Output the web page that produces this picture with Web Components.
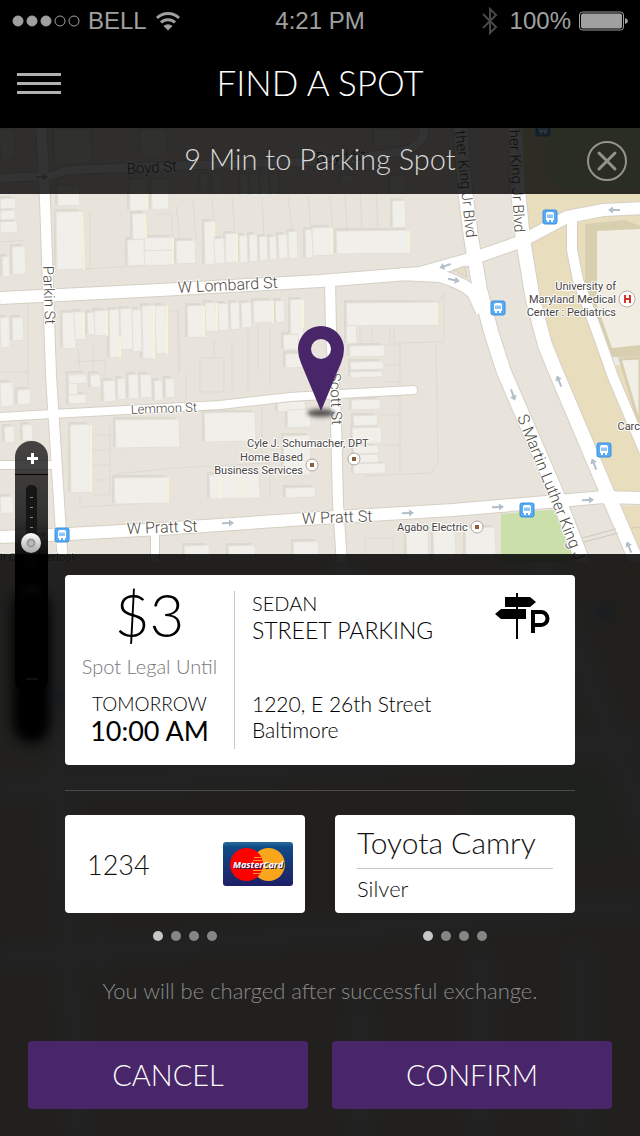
<!DOCTYPE html>
<html lang="en">
<head>
<meta charset="utf-8">
<meta name="viewport" content="width=device-width, initial-scale=1">
<title>Find a spot</title>
<style>
  body{
    margin: 0;
    background: #000;
    font-family: Lato, "Open Sans", sans-serif;
    font-weight: 300;
    --purple: #482669;
  }
</style>
</head>
<body>
<parking-screen>
  <status-bar slot="top" carrier="BELL" time="4:21 PM" battery="100%"></status-bar>
  <nav-bar slot="top">FIND A SPOT</nav-bar>
  <city-map slot="map"></city-map>
  <zoom-control slot="map"></zoom-control>
  <eta-banner slot="banner">9 Min to Parking Spot</eta-banner>

  <spot-card>
    <span slot="price">$3</span>
    <span slot="note">Spot Legal Until</span>
    <span slot="day">TOMORROW</span>
    <span slot="hour">10:00 AM</span>
    <span slot="vehicle">SEDAN</span>
    <span slot="kind">STREET PARKING</span>
    <span slot="address">1220, E 26th Street<br>Baltimore</span>
  </spot-card>
  <choice-row>
    <card-pager label="Payment card"><payment-card>1234</payment-card></card-pager>
    <card-pager label="Car"><car-card>Toyota Camry<span slot="colour">Silver</span></car-card></card-pager>
  </choice-row>
  <span slot="hint">You will be charged after successful exchange.</span>
  <action-button slot="actions">CANCEL</action-button>
  <action-button slot="actions">CONFIRM</action-button>
</parking-screen>

<script>
const define = (name, render, ready) => customElements.define(name, class extends HTMLElement{
  constructor(){
    super();
    this.attachShadow({mode:'open'});
  }

  connectedCallback(){
    this.shadowRoot.innerHTML = render(this);
    if(ready) ready(this, this.shadowRoot);
  }
});

define('status-bar', el => `
  <style>
    :host{
      display: grid;
      grid-template-columns: 1fr auto 1fr;
      align-items: center;
      height: 40px;
      padding: 0 12px;
      background: #000;
      color: #a0a0a0;
      font: 400 24px/42px "Liberation Sans", Arial, sans-serif;
    }
    div{ display: flex; align-items: center; gap: 8px; }
    div:last-child{ justify-content: flex-end; }
    svg{ display: block; }
  </style>
  <div>
    <svg width="68" height="12" viewBox="0 0 68 12" fill="#a0a0a0" stroke="#a0a0a0">
      <circle cx="6" cy="6" r="5"/><circle cx="20" cy="6" r="5"/><circle cx="34" cy="6" r="5"/>
      <circle cx="48" cy="6" r="5" fill="none"/><circle cx="62" cy="6" r="5" fill="none"/>
    </svg>
    <span>${el.getAttribute('carrier')}</span>
    <svg width="26" height="20" viewBox="0 0 26 20" fill="none" stroke="#a0a0a0" stroke-width="3">
      <path d="M2 7a16 16 0 0 1 22 0M6 11.500a10 10 0 0 1 14 0"/>
      <path d="M8.500 15a6.500 6.500 0 0 1 9 0L13 19.500z" fill="#a0a0a0" stroke="none"/>
    </svg>
  </div>
  <span>${el.getAttribute('time')}</span>
  <div>
    <svg width="16" height="28" viewBox="0 0 16 28" fill="none" stroke="#484848" stroke-width="2">
      <path d="M1 7l13 13-6 6V2l6 6L1 21"/>
    </svg>
    <span style="margin-left:4px">${el.getAttribute('battery')}</span>
    <svg width="49" height="20" viewBox="0 0 49 20">
      <rect x="0.500" y="1" width="44" height="18" rx="3" fill="none" stroke="#a0a0a0"/>
      <rect x="2" y="2.500" width="41" height="15" rx="2" fill="#a0a0a0"/>
      <path d="M46 7q3 1 3 3t-3 3z" fill="#a0a0a0"/>
    </svg>
  </div>
`);

define('nav-bar', () => `
  <style>
    :host{
      display: grid;
      grid-template-columns: 1fr auto 1fr;
      align-items: center;
      height: 88px;
      padding: 0 17px;
      background: #000;
      color: #fff;
    }
    button{
      width: 44px;
      height: 44px;
      padding: 0;
      border: 0;
      background: none;
    }
    svg{ display: block; }
    h1{ margin: 0; font: inherit; font-size: 35px; line-height: 84px; height: 88px; }
  </style>
  <button aria-label="Menu">
    <svg width="44" height="44" fill="#b0b0b0">
      <path d="M0 11h44v3H0zM0 20h44v3H0zM0 29h44v3H0z"/>
    </svg>
  </button>
  <h1><slot></slot></h1>
`);

define('eta-banner', () => `
  <style>
    :host{
      display: grid;
      grid-template-columns: 40px 1fr 40px;
      align-items: center;
      height: 66px;
      padding: 0 13px;
      background: rgba(0, 0, 0, .8);
      color: #d8d8d8;
      font-size: 29px;
    }
    p{ grid-column: 2; margin: 0; text-align: center; line-height: 62px; height: 66px; }
    button{
      width: 40px;
      height: 40px;
      padding: 0;
      border: 0;
      background: none;
    }
    svg{ display: block; }
  </style>
  <p><slot></slot></p>
  <button aria-label="Close">
    <svg width="40" height="40" fill="none" stroke="#96928e" stroke-width="2">
      <circle cx="20" cy="20" r="19"/>
      <path d="M12 12l16 16M28 12L12 28" stroke-width="3" stroke-linecap="round"/>
    </svg>
  </button>
`);

const buildings = [
  [0,199,15,10],[0,211,15,9],[0,222,17,11],[12,247,13,28],[2,257,7,20],[57,186,22,20],[56,212,26,58],
  [129,180,18,31],[151,180,17,30],[132,214,14,26],[127,240,17,26],[144,238,29,13],[144,251,29,15],
  [176,241,19,23],[204,222,10,43],[214,239,10,25],[225,234,12,29],[239,236,8,27],[249,235,8,27],
  [259,237,8,24],[269,237,7,23],[278,235,9,24],[288,232,9,27],[305,230,7,28],[312,228,20,28],
  [336,231,73,23],[392,201,13,27],[346,303,91,23],[346,326,10,18],[349,346,35,11],[350,362,33,8],
  [62,313,13,36],[74,312,10,28],[87,313,7,22],[94,311,13,25],[109,310,10,48],[120,309,12,41],
  [132,310,9,42],[142,306,12,53],[155,306,11,48],[187,306,17,32],[205,303,11,29],[218,304,10,27],
  [230,303,9,27],[241,303,10,25],[253,301,20,22],[275,301,9,22],[290,300,13,42],[283,335,15,15],
  [285,354,30,14],[0,318,9,30],[12,318,11,23],[0,383,13,24],[17,390,13,15],[68,375,9,30],[68,375,18,9],
  [68,395,18,9],[90,375,10,13],[103,381,12,21],[117,379,8,21],[128,375,10,24],[140,375,11,23],
  [154,381,8,20],[165,379,9,19],[4,427,10,16],[22,425,10,16],[70,425,20,68],[115,420,64,28],
  [204,413,51,29],[277,402,28,10],[287,410,23,18],[283,436,27,40],[114,478,54,26],[209,475,50,24],
  [285,488,30,10],[0,497,13,17],[184,546,25,16],[228,546,27,16],[293,542,25,20],[350,372,32,6],
  [351,400,29,10],[353,416,24,10],[352,428,29,16],[353,446,25,8],[353,455,25,8],[353,464,32,10],
  [406,532,22,30],[433,530,22,30],[465,528,30,30],[67,374,20,1],[90,374,11,1],
  [0,130,14,30],[54,130,36,34],[140,130,26,26],[374,130,26,16],[200,174,8,18],
  [212,174,8,18],[240,174,8,22],[250,174,8,22],[260,174,8,22],[270,174,8,22],[340,176,12,8],[390,176,14,18]
];

const plots = `M90 212v58M157 214h15v24M176 205l4 34M193 200l3 40M212 198l2 24M232 197l3 38M262 198l2 38M288 196l4 36
  M308 196l3 32M330 196l3 34M345 194l2 36M360 194l2 36M376 194l2 36M84 269l90-5M26 240l-26 2M78 349l3 28M93 345v30
  M105 358v16M75 362l31-2M168 311h10v64M178 311l2 60M200 358h24v34h-24zM214 340v16M232 340v50M248 330v60M258 326v44
  M270 326v60M0 372h28M28 300v104M375 318l54-4 15-20v48l-50 1v-17M360 328v14M372 328v14M390 328v14M384 345h16v20h-16
  M400 345v130M436 345l2 118-7 10-68 3M384 382h18M384 396h18M380 415h20M383 445h18M110 425v70h-18M92 435h18M92 450h18
  M92 465h18M92 480h18M115 474l60-6 95-5v35M80 495v12l90-5M186 374v30M262 405v60M365 556v-18h28v18M120 166v-36M180 166v-36
  M220 164v-34M260 162v-32M300 160v-30M92 130v34`;

const streets = `M0 178L50 176 68 170 200 165 340 161 398 152Q424 148 424 128
  M0 465h54`;
const avenues = `M41 120L45 200 51 375 63 565M330 280L331 330 336 420 338 503 342 565M572 215V250L578 280 600 340 613 377 645 453`;
const mains = `M0 298L160 290 320 281 420 273 477 257 520 242 567 217 603 210 645 208
  M400 274L440 276Q466 284 474 294L482 312
  M0 537L50 535 160 529 320 518 453 510 570 500 603 497 645 498`;
const boulevards = `M460 120L465 190 471 237 480 290 492 335 504 372 555 490 584 565M515 120L518 190 523 240 533 300 545 345 556 372 606 490 638 565`;

// drawn twice: the wide pass leaves a thin casing round the white pass
const roads = (colour, extra) => `
  <g fill="none" stroke="${colour}">
    <path stroke-width="${8 + extra}" d="${streets}M155 526v36"/>
    <path stroke-width="${8 + extra}" stroke-linecap="round" d="M0 417L52 414 220 405 290 397 340 394 413 390"/>
    <path stroke-width="${10 + extra}" d="${avenues}"/>
    <path stroke-width="${12 + extra}" d="${mains}"/>
    <path stroke-width="${14 + extra}" d="${boulevards}"/>
  </g>`;

const bus = (x, y) => `
  <g transform="translate(${x} ${y})">
    <rect x="-7" y="-7" width="14" height="14" rx="2" fill="#58aaf5" stroke="#3c8fdc"/>
    <path d="M-4-3q0-2 2-2h4q2 0 2 2v6h-1v2h-2v-2h-2v2h-2v-2h-1z" fill="#fff"/>
    <path d="M-3-2.500h6V1h-6z" fill="#8cc6fa"/>
  </g>`;

const arrow = (x, y, turn) => `
  <path transform="translate(${x} ${y}) rotate(${turn})" d="M-6-1H1v-2.500L6 0 1 3.500V1h-7z" fill="#b3bfc8"/>`;

const place = (x, y) => `
  <circle cx="${x}" cy="${y}" r="6" fill="#fff" stroke="#aaa59c"/>
  <rect x="${x - 2}" y="${y - 2}" width="4" height="4" fill="#8d5d3c"/>`;

const street = (x, y, turn, size, text) => `
  <text transform="translate(${x} ${y}) rotate(${turn})" font-size="${size}">${text}</text>`;

define('city-map', () => `
  <style>
    :host{ display: block; position: absolute; inset: 0; overflow: hidden; }
    svg{ display: block; width: 100%; height: 100%; }
    text{
      font-family: Roboto, sans-serif;
      stroke: #fff;
      stroke-width: 2px;
      stroke-linejoin: round;
      paint-order: stroke;
    }
    .streets{ font-weight: 300; fill: #4e4a42; }
    .places{ font-weight: 400; font-size: 11px; fill: #47443f; stroke: #f3f0ea; }
  </style>
  <svg viewBox="0 128 640 1008" preserveAspectRatio="xMidYMin slice" role="img" aria-label="Map">
    <defs>
      <filter id="soft" x="-20%" y="-20%" width="140%" height="140%"><feGaussianBlur stdDeviation="7"/></filter>
      <filter id="shade" x="-50%" y="-100%" width="200%" height="300%"><feGaussianBlur stdDeviation="2"/></filter>
      <clipPath id="sharp"><path d="M0 128h640v434H0z"/></clipPath>
    </defs>
    <rect y="128" width="640" height="1008" fill="#e8e4dc"/>

    <g filter="url(#soft)" fill="none" stroke="#f5f3f8" stroke-width="14">
      <path d="M45 560L80 1136M345 560V760M0 790L640 740M540 560L660 860M620 560L660 660M0 960L640 905M100 930V970M480 950V1136M580 950V1136M360 1000V1136"/>
      <path d="M470 770h130l22 82-148 8z" fill="#d4e6bd" stroke="none"/>
      <path d="M590 560h50v100h-30z" fill="#e8ddbb" stroke="none"/>
      <circle cx="605" cy="612" r="9" fill="#8fc2f0" stroke="none"/>
      <circle cx="62" cy="697" r="9" fill="#8fc2f0" stroke="none"/>
    </g>

    <g clip-path="url(#sharp)">
      <rect y="128" width="640" height="434" fill="#e8e4dc"/>
      <path d="M524 128h116v370h-30l-50-120-22-70-14-70z" fill="#e8ddbd"/>
      <path d="M546 128h94v62h-80q-14-4-14-20z" fill="#cbdfab"/>
      <path d="M501 514l60-5 24 53h-84z" fill="#cbdfab"/>
      <path d="M622 506h18v56z" fill="#e8ddbd"/>
      <path d="M585 224l40-4 15 6v130l-34 2-21-53z" fill="#d8cfb1"/>
      <path d="M597 231l43-2v116l-28 3-15-43z" fill="#f1ede2"/>
      <path d="M610 357h30v8h-28z" fill="#ebebec"/>
      <path d="M620 359l20-1v68z" fill="#f1eee6" stroke="#d8cfb1" stroke-width="3"/>
      <path d="${plots}" fill="none" stroke="#dfdad1"/>
      <g fill="#dcd9d1" transform="translate(-2 -3)">
        ${buildings.map(([x, y, w, h]) => `<path d="M${x} ${y}h${w - 2}l2 3v${Math.min(h, 3)}H${x + 2}v${Math.max(h - 4, 0)}h-2z"/>`).join('')}
      </g>
      <g fill="#f1efe9" stroke="#e4e1da">
        ${buildings.map(([x, y, w, h]) => `<path d="M${x} ${y}l${w}-1 1 ${h}-${w} 1z"/>`).join('')}
      </g>
      <path d="M82 212l2 58M147 194v16M145 214l1 24M173 238v26M214 222v14M237 234v28M332 228v26M409 231v22M84 313v26M107 311v25
        M120 336v22M154 306v53M167 306v48M204 306v31M217 303v28M273 301v22M303 300v28M437 303v22M91 425v67M168 478v25M220 478v21M240 478v20"
        fill="none" stroke="#f6f3d8" stroke-width="2"/>
      ${roads('#d6d0c4', 2)}
      ${roads('#fff', 0)}
      <path d="M453 270l12-4 2 11z" fill="#e8ddc8" stroke="#d6d0c4"/>
      <path d="M582 538l34-9M584 542l34-9M632 528l8-1" stroke="#cfc9bf"/>

      ${arrow(445, 266, 160)}${arrow(454, 280, 12)}${arrow(614, 210, 180)}${arrow(513, 395, 70)}
      ${arrow(559, 381, -112)}${arrow(594, 464, -112)}${arrow(629, 547, -112)}${arrow(228, 523, -2)}
      ${arrow(408, 513, -2)}${arrow(498, 507, -3)}${arrow(588, 500, -3)}${arrow(42, 177, 0)}${arrow(41, 534, 0)}
      ${bus(543, 129)}${bus(550, 217)}${bus(498, 308)}${bus(604, 450)}${bus(527, 510)}${bus(62, 535)}

      <g class="streets">
        ${street(127, 174, -3, 15, 'Boyd St')}
        ${street(316, 163, -3, 15, 'Boyd St')}
        ${street(178, 293, -3, 16, 'W Lombard St')}
        ${street(43, 266, 88, 15, 'Parkin St')}
        ${street(131, 414, -2, 13, 'Lemmon St')}
        ${street(127, 534, -2, 16, 'W Pratt St')}
        ${street(302, 524, -2, 16, 'W Pratt St')}
        ${street(330, 373, 88, 15, 'Scott St')}
        ${street(455, 131, 84, 15, 'ther King Jr Blvd')}
        ${street(509, 130, 87, 15, 'her King Jr Blvd')}
        ${street(517, 417, 68, 16, 'S Martin Luther King J')}
      </g>
      <g class="places">
        <text x="247" y="447">Cyle J. Schumacher, DPT</text>
        <text x="303" y="461" text-anchor="end">Home Based</text>
        <text x="303" y="474" text-anchor="end">Business Services</text>
        <text x="397" y="531">Agabo Electric</text>
        <text x="616" y="290" text-anchor="end">University of</text>
        <text x="616" y="303" text-anchor="end">Maryland Medical</text>
        <text x="616" y="316" text-anchor="end">Center : Pediatrics</text>
        <text x="640" y="430" text-anchor="end">Carc</text>
        <text x="0" y="561" opacity=".6">lt Clair Overlook</text>
      </g>
      ${place(312, 465)}${place(354, 459)}${place(477, 527)}
      <circle cx="627" cy="299" r="8" fill="#fff" stroke="#b5b0a5"/>
      <path d="M625 295v8M630 295v8M625 299h5" fill="none" stroke="#d8342c" stroke-width="2"/>
    </g>

    <ellipse cx="321" cy="413" rx="14" ry="4" fill="#333" opacity=".8" filter="url(#shade)"/>
    <path d="M321 411l-20-48Q298 356 298 349a23 23 0 0 1 46 0q0 7-3 14zM321 339a10 10 0 1 0 0 20 10 10 0 0 0 0-20z" fill="#482669" fill-rule="evenodd"/>
  </svg>
`);

define('zoom-control', () => `
  <style>
    :host{
      position: absolute;
      top: 313px;
      left: 15px;
      display: flex;
      flex-direction: column;
      align-items: center;
      width: 33px;
      height: 254px;
      border-radius: 16px;
      background:
        radial-gradient(circle at 50% 154px, #888 0, transparent 14px),
        linear-gradient(rgba(40,40,40,.85), rgba(0,0,0,.78) 30%, #000 50%);
    }
    /* the soft shadow stays under the lower half, hidden by the sheet */
    :host::before{
      content: '';
      position: absolute;
      z-index: -1;
      top: 150px;
      left: 0;
      width: 33px;
      height: 150px;
      border-radius: 16px;
      background: #000;
      box-shadow: 0 0 16px #000;
      filter: blur(5px);
    }
    button{
      width: 33px;
      height: 34px;
      padding: 0;
      border: 0;
      background: none;
    }
    button:first-of-type{ border-bottom: 1px solid #000; }
    button:last-of-type{ border-top: 1px solid #000; }
    svg{ display: block; margin: auto; }
    label{ flex: 1; display: flex; padding: 10px 0; }
    input{
      writing-mode: vertical-lr;
      direction: rtl;
      appearance: none;
      width: 20px;
      height: 166px;
      margin: 0;
      background: none;
    }
    input::-webkit-slider-runnable-track{
      width: 11px;
      height: 166px;
      margin: 0 auto;
      border-radius: 5px;
      background:
        repeating-linear-gradient(transparent 0 9px, #888 9px 10px) center 3px / 3px 50px no-repeat,
        linear-gradient(#161616 40%, transparent 60%);
    }
    input::-webkit-slider-thumb{
      appearance: none;
      width: 20px;
      height: 20px;
      margin-left: -5px;
      border-radius: 50%;
      background: radial-gradient(circle, #bbb 0 2px, #999 3px 4px, transparent 5px), linear-gradient(#fff, #a9a9ad);
    }
  </style>
  <button aria-label="Zoom in"><svg width="12" height="12" fill="#fff"><path d="M5 1h3v4h4v3H8v4H5V8H1V5h4z"/></svg></button>
  <label><input type="range" min="0" max="100" value="67" aria-label="Zoom"></label>
  <button aria-label="Zoom out"><svg width="12" height="12" fill="#777"><path d="M0 5h12v2H0z"/></svg></button>
`);

define('spot-card', () => `
  <style>
    :host{
      display: grid;
      grid-template-columns: 170px 1fr auto;
      padding: 16px 0;
      border-radius: 4px;
      background: #fff;
      color: #000;
      font-size: 20px;
      line-height: 26px;
    }
    div{ display: flex; flex-direction: column; }
    slot{ display: block; }
    .until{ align-items: center; border-right: 1px solid #c8c8c8; }
    .price{ font-size: 60px; line-height: 46px; padding-bottom: 4px; }
    .note{ margin: 12px 0; color: #777; }
    .day{ font-size: 19px; }
    .hour{ font-size: 27px; line-height: 28px; padding-bottom: 4px; font-weight: 400; }
    .where{ justify-content: space-between; padding: 0 0 6px 17px; }
    .vehicle{ line-height: 24px; }
    .kind{ font-size: 23px; line-height: 30px; }
    .address{ font-size: 21px; }
    svg{ display: block; margin-right: 24px; }
  </style>
  <div class="until">
    <slot name="price" class="price"></slot>
    <slot name="note" class="note"></slot>
    <slot name="day" class="day"></slot>
    <slot name="hour" class="hour"></slot>
  </div>
  <div class="where">
    <div>
      <slot name="vehicle" class="vehicle"></slot>
      <slot name="kind" class="kind"></slot>
    </div>
    <slot name="address" class="address"></slot>
  </div>
  <svg width="56" height="50" viewBox="0 0 56 50" role="img" aria-label="Street parking">
    <path d="M21 2h2v46h-2zM10 6h25l6 5-6 5H10zM0 23l6-5h25v10H6z"/>
    <path d="M38 42V21h8a6.500 6.500 0 0 1 0 13h-8" fill="none" stroke="#000" stroke-width="4"/>
  </svg>
`);

define('choice-row', () => `
  <style>
    :host{
      display: grid;
      grid-template-columns: 1fr 1fr;
      gap: 30px;
      margin-top: 25px;
      padding-top: 24px;
      border-top: 1px solid #4c4b4a;
    }
  </style>
  <slot></slot>
`);

define('card-pager', el => `
  <style>
    :host{ display: block; }
    .card{
      height: 98px;
      border-radius: 4px;
      background: #fff;
      color: #111;
      overflow: hidden;
    }
    nav{ display: flex; justify-content: center; gap: 8px; padding-top: 18px; }
    button{
      width: 10px;
      height: 10px;
      padding: 0;
      border: 0;
      border-radius: 50%;
      background: #868686;
    }
    button[aria-current]{ background: #c6c6c6; }
  </style>
  <div class="card"><slot></slot></div>
  <nav aria-label="${el.getAttribute('label')}">
    ${[1, 2, 3, 4].map(n => `<button aria-label="${n}" ${n == 1 ? 'aria-current="true"' : ''}></button>`).join('')}
  </nav>
`, (el, root) => {
  const dots = [...root.querySelectorAll('button')];
  dots.forEach(dot => dot.addEventListener('click', () => {
    dots.forEach(d => d.removeAttribute('aria-current'));
    dot.setAttribute('aria-current', 'true');
  }));
});

define('payment-card', () => `
  <style>
    :host{
      display: flex;
      align-items: center;
      justify-content: space-between;
      height: 98px;
      padding: 0 12px 0 22px;
      font-size: 27px;
    }
    svg{ display: block; }
    text{ font: italic 700 9px "Open Sans", sans-serif; }
  </style>
  <slot></slot>
  <svg width="70" height="44" viewBox="0 0 70 44" role="img" aria-label="MasterCard">
    <defs>
      <linearGradient id="blue" x2="0" y2="1">
        <stop stop-color="#2a6c9c"/><stop offset=".12" stop-color="#0f4a84"/><stop offset="1" stop-color="#1e1f66"/>
      </linearGradient>
    </defs>
    <rect width="70" height="44" rx="3" fill="url(#blue)"/>
    <circle cx="45.500" cy="22.500" r="16.500" fill="#f9a61c"/>
    <circle cx="23.500" cy="22.500" r="16.500" fill="#fe0000"/>
    <path d="M31 15.500h7M30 18.500h9M30 28.500h9M30 31.500h8" stroke="#f9a61c"/>
    <text x="36" y="27" text-anchor="middle" fill="#1c2360">MasterCard</text>
    <text x="35" y="26" text-anchor="middle" fill="#fff">MasterCard</text>
  </svg>
`);

define('car-card', () => `
  <style>
    :host{ display: block; padding: 4px 22px; }
    .name{
      display: block;
      border-bottom: 1px solid #c8c8c8;
      font-size: 30px;
      line-height: 46px;
      padding-bottom: 3px;
    }
    .colour{ display: block; font-size: 22px; line-height: 40px; }
  </style>
  <span class="name"><slot></slot></span>
  <slot name="colour" class="colour"></slot>
`);

define('action-button', () => `
  <style>
    :host{ flex: 1; display: block; }
    button{
      display: block;
      width: 100%;
      height: 68px;
      padding: 0 0 2px;
      border: 0;
      border-radius: 4px;
      background: var(--purple);
      color: #fff;
      font: inherit;
      font-size: 29px;
      cursor: pointer;
    }
  </style>
  <button><slot></slot></button>
`);

define('parking-screen', () => `
  <style>
    :host{ display: flex; flex-direction: column; min-height: 100vh; }
    main{
      flex: 1;
      position: relative;
      display: flex;
      flex-direction: column;
      overflow: hidden;
    }
    .banner, .sheet{ position: relative; }
    .view{ height: 360px; }
    .sheet{
      flex: 1;
      display: flex;
      flex-direction: column;
      padding: 21px 28px 27px;
      background: rgba(0, 0, 0, .86);
    }
    .cards{ padding: 0 37px; }
    p{
      margin: 32px 0;
      color: #8c8b8a;
      font-size: 22px;
      line-height: 36px;
      text-align: center;
    }
    .actions{ display: flex; gap: 24px; margin-top: auto; }
    ::slotted(zoom-control){ isolation: isolate; }
  </style>
  <slot name="top"></slot>
  <main>
    <slot name="map"></slot>
    <div class="banner"><slot name="banner"></slot></div>
    <div class="view"></div>
    <section class="sheet">
      <div class="cards"><slot></slot></div>
      <p><slot name="hint"></slot></p>
      <div class="actions"><slot name="actions"></slot></div>
    </section>
  </main>
`);
</script>
</body>
</html>
